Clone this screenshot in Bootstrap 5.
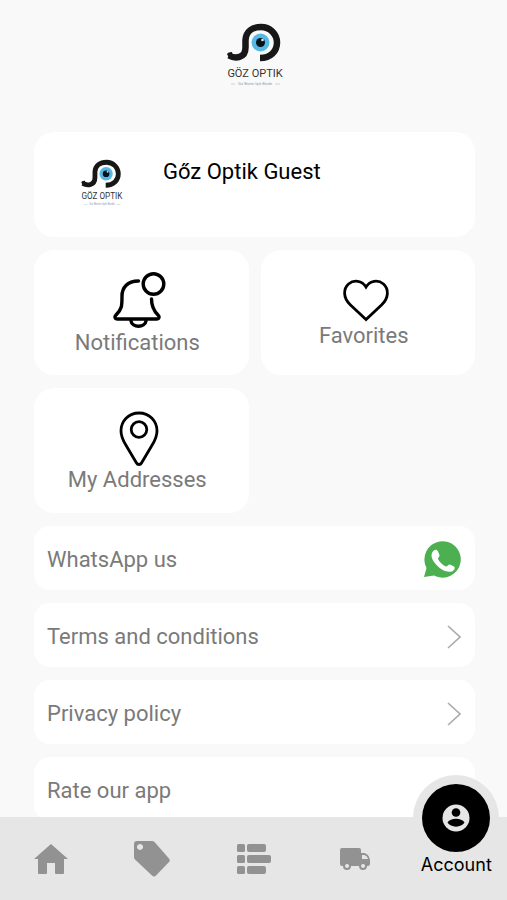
<!DOCTYPE html>
<html lang="en">
<head>
<meta charset="utf-8">
<meta name="viewport" content="width=device-width, initial-scale=1">
<title>Account</title>
<link href="https://cdn.jsdelivr.net/npm/bootstrap@5.3.0/dist/css/bootstrap.min.css" rel="stylesheet">
<style>
body { background: #f9f9f9; font-family: Roboto, "Liberation Sans", sans-serif; font-size: 22px; line-height: 26px; color: #7a7a7a; }
svg { display: block; flex: none; }
main { padding: 0 32px 24px 34px; scrollbar-width: none; }
main::-webkit-scrollbar { display: none; }
.brand-logo { padding: 22px 0 44px; }
.panel { background: #fff; border-radius: 20px; color: inherit; text-decoration: none; }
.profile { min-height: 105px; padding: 25px 45px; gap: 38px; }
.profile h1 { font-size: 22px; line-height: 30px; color: #000; font-weight: 400; }
.stack { gap: 13px; }
.tiles { display: grid; grid-template-columns: 1fr 1fr; gap: 13px 12px; }
.tile { height: 125px; padding: 2px 8px 0 0; }
.entry { min-height: 64px; padding: 3px 14px 0 13px; border-radius: 16px; }
.tabbar { background: #e6e6e6; height: 83px; }
.tabbar a { flex: 1 1 0; color: #929292; }
.tabbar a.current { color: #000; font-family: Inter, sans-serif; font-size: 18px; line-height: 24px; padding-bottom: 23px; }
.bubble { width: 86px; height: 86px; top: -42px; left: 50%; margin-left: -43px; background: #e6e6e6; }
.disc { width: 68px; height: 68px; background: #000; color: #e6e6e6; }
.current span { z-index: 1; }
</style>
<script defer src="https://cdn.jsdelivr.net/npm/bootstrap@5.3.0/dist/js/bootstrap.bundle.min.js"></script>
</head>
<body>
<div class="d-flex flex-column vh-100">
  <main class="flex-grow-1 overflow-auto">
    <div class="brand-logo d-flex justify-content-center">
      <svg width="62" height="66" viewBox="0 0 62 66" role="img" aria-label="Göz Optik">
        <g id="eye">
          <path d="M5 33.500c6 3.500 16.500 3 16.500-8V18C22 9.500 28.500 5 37 5c9 0 16 7 16 15.500 0 9-6.500 15.500-17 15.500" fill="none" stroke="#171717" stroke-width="6.500"/>
          <path d="M3 32q1-2 5-2l1 5-3 1q-2-1-3-4z" fill="#171717"/>
          <circle cx="36.500" cy="20.500" r="9" fill="#55b9e4"/>
          <circle cx="36.500" cy="20.500" r="4.500" fill="#07121a"/>
          <circle cx="38.500" cy="18" r="1.300" fill="#d9f1fb"/>
          <path d="M7 62h4m40 0h5" stroke="#b5c3c9" stroke-width=".7"/>
        </g>
        <text x="31" y="55" text-anchor="middle" font-size="11" fill="#333">GÖZ OPTIK</text>
        <text x="31" y="63" text-anchor="middle" font-size="4" fill="#8ba1ab">Siz Bizim Işık Bizde</text>
      </svg>
    </div>
    <div class="d-flex flex-column stack">
      <section class="panel profile d-flex">
        <svg width="46" height="52" viewBox="0 0 62 66" aria-hidden="true">
          <use href="#eye"/>
          <text x="31" y="55" text-anchor="middle" font-size="11" fill="#333">GÖZ OPTIK</text>
          <text x="31" y="63" text-anchor="middle" font-size="4" fill="#8ba1ab">Siz Bizim Işık Bizde</text>
        </svg>
        <h1 class="m-0">Gőz Optik Guest</h1>
      </section>
      <nav class="tiles" aria-label="Account pages">
        <a href="#" class="panel tile d-flex flex-column align-items-center justify-content-center">
          <svg width="58" height="58" viewBox="0 0 58 58" fill="none" stroke="#000" stroke-width="3.400" stroke-linecap="round" stroke-linejoin="round"><circle cx="45.500" cy="12" r="10.300"/><path d="M30.500 9C19 9 14 16 14 24c0 10 0 13-6 19-2 2-1 4 1 4h40c2 0 3-2 1-4-5-5-6.500-9-6.500-16"/><path d="M23 49c1 7 14 7 15 0"/></svg>
          <span>Notifications</span>
        </a>
        <a href="#" class="panel tile d-flex flex-column align-items-center justify-content-center">
          <svg width="50" height="44" viewBox="-4 0 50 44" fill="none" stroke="#000" stroke-width="2.800"><path d="M23 40.500 7.500 26C-.5 18.500.5 9.500 5.500 5 11 .5 19 1.500 23 8c4-6.500 12-7.500 17.500-3 5 4.500 6 13.500-2 21z"/></svg>
          <span>Favorites</span>
        </a>
        <a href="#" class="panel tile d-flex flex-column align-items-center justify-content-center">
          <svg width="44" height="56" viewBox="-3 0 44 56" fill="none" stroke="#000" stroke-width="2.800"><path d="M21 2C10.500 2 3 10 3 20c0 7 3 11 6 16l9.500 16c1 2 4 2 5 0L33 36c3-5 6-9 6-16C39 10 31.500 2 21 2z"/><circle cx="21" cy="18.500" r="7.800"/></svg>
          <span>My Addresses</span>
        </a>
      </nav>
      <a href="#" class="panel entry d-flex align-items-center justify-content-between">
        <span>WhatsApp us</span>
        <svg width="38" height="38" viewBox="0 0 38 38"><path d="M1 36 3.500 27A18.200 18.200 0 1 1 11 34.500z" fill="#4caf50"/><path d="M9.500 11c2-3 4.500-3 5.500-.5l1.500 3.500c.5 1.500-2 3-1.500 4 2 3.500 4.500 6 8 7.500 1 .5 2.500-2.500 4-2l4 2c1.500 1 .5 3.500-1.500 4.700C24.500 32 18 29 14 24.500 9.500 20 7 15 9.500 11z" fill="#fff"/></svg>
      </a>
      <a href="#" class="panel entry d-flex align-items-center justify-content-between">
        <span>Terms and conditions</span>
        <svg width="14" height="24" viewBox="0 0 14 24" fill="none" stroke="#aaa" stroke-width="1.600"><path d="m1 1 12 11L1 23"/></svg>
      </a>
      <a href="#" class="panel entry d-flex align-items-center justify-content-between">
        <span>Privacy policy</span>
        <svg width="14" height="24" viewBox="0 0 14 24" fill="none" stroke="#aaa" stroke-width="1.600"><path d="m1 1 12 11L1 23"/></svg>
      </a>
      <a href="#" class="panel entry d-flex align-items-center justify-content-between">
        <span>Rate our app</span>
      </a>
    </div>
  </main>
  <nav class="tabbar d-flex flex-shrink-0" aria-label="Main">
    <a href="#" aria-label="Home" class="d-flex align-items-center justify-content-center">
      <svg width="34" height="30" viewBox="0 0 34 30" fill="currentColor"><path d="M17 0 34 15h-4v14q0 1-1 1h-7q-1 0-1-1V19h-8v10q0 1-1 1H5q-1 0-1-1V15H0z"/></svg>
    </a>
    <a href="#" aria-label="Offers" class="d-flex align-items-center justify-content-center">
      <svg width="36" height="36" viewBox="0 0 36 36" fill="currentColor"><path fill-rule="evenodd" d="M3 0h15q1.500 0 2.500 1L35 17.500q1.500 2 0 3.500L22 34.500q-2 2-4 0L1 18.500Q0 17.500 0 16V3q0-3 3-3zm3 3a3 3 0 1 0 .1 0z"/></svg>
    </a>
    <a href="#" aria-label="Categories" class="d-flex align-items-center justify-content-center">
      <svg width="34" height="30" viewBox="0 0 34 30" fill="currentColor"><rect width="8" height="8" rx="1.500"/><rect y="11" width="8" height="8" rx="1.500"/><rect y="22" width="8" height="8" rx="1.500"/><rect x="10" width="19" height="8" rx="2"/><rect x="10" y="11" width="24" height="8" rx="2"/><rect x="10" y="22" width="19" height="8" rx="2"/></svg>
    </a>
    <a href="#" aria-label="Orders" class="d-flex align-items-center justify-content-center">
      <svg width="30" height="22" viewBox="0 0 30 22" fill="currentColor"><path fill-rule="evenodd" d="M2 0h17q2 0 2 2v3h3q5 1 6 7v4q0 2-2 2h-1a4 4 0 0 1-8 0h-8a4 4 0 0 1-8 0H2q-2 0-2-2V2q0-2 2-2zm20 7v4h6q-1-3.500-4-4zM7 16a2 2 0 1 0 .1 0zm16 0a2 2 0 1 0 .1 0z"/></svg>
    </a>
    <a href="#" aria-current="page" class="current position-relative d-flex align-items-end justify-content-center text-decoration-none">
      <div class="bubble position-absolute rounded-circle d-flex align-items-center justify-content-center">
        <div class="disc rounded-circle d-flex align-items-center justify-content-center">
          <svg width="28" height="28" viewBox="0 0 28 28"><circle cx="14" cy="14" r="13.500" fill="currentColor"/><circle cx="14" cy="8.500" r="4.300" fill="#000"/><path d="M5.500 18.500c3-5 14-5 17 0-3 5.500-14 5.500-17 0z" fill="#000"/></svg>
        </div>
      </div>
      <span>Account</span>
    </a>
  </nav>
</div>
</body>
</html>
